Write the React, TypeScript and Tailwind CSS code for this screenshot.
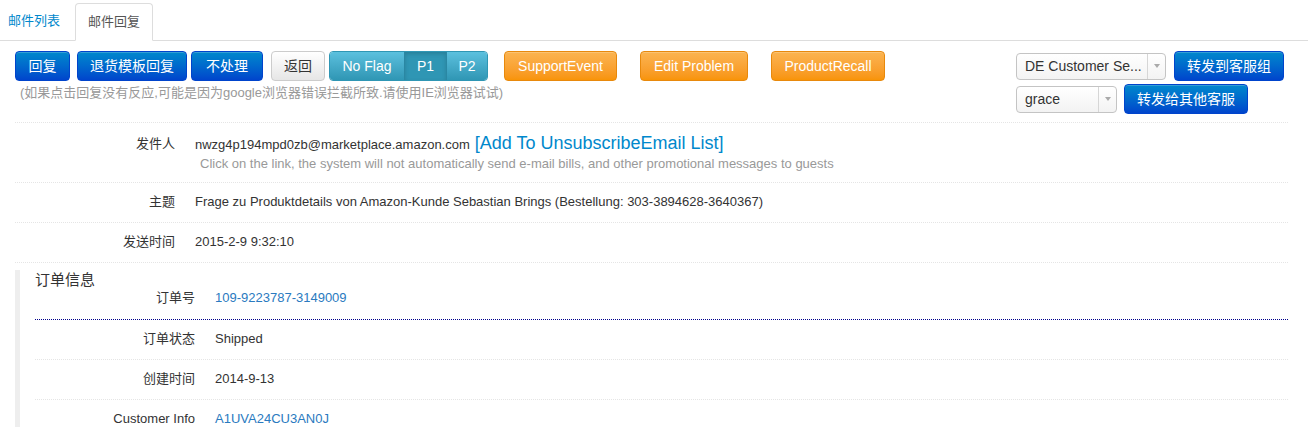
const font = { fontFamily: '"Liberation Sans", Arial, "Noto Sans CJK SC", sans-serif' }

function Btn({ children, kind, className = '' }: { children: React.ReactNode; kind: 'primary' | 'default' | 'warning'; className?: string }) {
  const styles = {
    primary: 'text-white border-[#0044cc] bg-gradient-to-b from-[#0088cc] to-[#0044cc]',
    default: 'text-[#333] border-[#cccccc] bg-gradient-to-b from-white to-[#e6e6e6]',
    warning: 'text-white border-[#e8890c] bg-gradient-to-b from-[#fbb450] to-[#f89406]',
  }
  return (
    <button className={`h-[30px] px-3 rounded-[4px] border text-[14px] leading-none shadow-[inset_0_1px_0_rgba(255,255,255,0.2)] ${styles[kind]} ${className}`}>
      {children}
    </button>
  )
}

function FakeSelect({ label, className }: { label: string; className: string }) {
  return (
    <div className={`h-[27px] flex items-stretch border border-[#c4c4c4] rounded-[4px] bg-gradient-to-b from-white to-[#f3f3f3] text-[14px] text-[#333] ${className}`}>
      <div className="flex-1 flex items-center px-2 truncate">{label}</div>
      <div className="w-[18px] border-l border-[#d6d6d6] flex items-center justify-center">
        <span className="block w-0 h-0 border-l-[3px] border-r-[3px] border-t-[4px] border-l-transparent border-r-transparent border-t-[#aaa]" />
      </div>
    </div>
  )
}

function Row({ label, children, h = 'h-[40px]', line = 'border-[#e5e5e5]', pt = 'pt-[9px]' }: { label: string; children: React.ReactNode; h?: string; line?: string; pt?: string }) {
  return (
    <div className={`flex items-start border-b border-dotted ${pt} ${line} ${h}`}>
      <div className="w-[160px] text-right text-[13px] text-[#333] shrink-0">{label}</div>
      <div className="pl-5 text-[13px] text-[#333]">{children}</div>
    </div>
  )
}

export default function App() {
  return (
    <div className="bg-white w-[1308px] h-[427px] overflow-hidden" style={font}>
      {/* tabs */}
      <div className="h-[41px] border-b border-[#dddddd] flex items-end pl-[2px]">
        <div className="h-[38px] px-[6px] flex items-center text-[13px] text-[#0088cc] mr-[9px]">邮件列表</div>
        <div className="h-[38px] px-[12px] flex items-center text-[13px] text-[#555] bg-white border border-[#dddddd] border-b-white rounded-t-[4px] -mb-px">邮件回复</div>
      </div>

      {/* toolbar */}
      <div className="flex justify-between pl-[15px] pr-[24px] pt-[10px]">
        <div>
          <div className="flex items-center">
            <Btn kind="primary" className="w-[55px]">回复</Btn>
            <Btn kind="primary" className="w-[110px] ml-[7px]">退货模板回复</Btn>
            <Btn kind="primary" className="w-[72px] ml-[4px]">不处理</Btn>
            <Btn kind="default" className="w-[54px] ml-[8px]">返回</Btn>
            <div className="flex ml-[4px] h-[30px] rounded-[4px] overflow-hidden border border-[#2f96b4] text-white text-[14px]">
              <div className="w-[74px] flex items-center justify-center bg-gradient-to-b from-[#5bc0de] to-[#2f96b4]">No Flag</div>
              <div className="w-[42px] flex items-center justify-center bg-[#2f96b4] border-l border-[#2a87a3] shadow-[inset_0_2px_4px_rgba(0,0,0,0.15)]">P1</div>
              <div className="w-[41px] flex items-center justify-center bg-gradient-to-b from-[#5bc0de] to-[#2f96b4] border-l border-[#2a87a3]">P2</div>
            </div>
            <Btn kind="warning" className="w-[113px] ml-[16px]">SupportEvent</Btn>
            <Btn kind="warning" className="w-[108px] ml-[23px]">Edit Problem</Btn>
            <Btn kind="warning" className="w-[114px] ml-[23px]">ProductRecall</Btn>
          </div>
          <div className="pl-[5px] pt-[2px] text-[13px] text-[#999]">(如果点击回复没有反应,可能是因为google浏览器错误拦截所致.请使用IE浏览器试试)</div>
        </div>
        <div className="flex flex-col gap-[3px]">
          <div className="flex items-center">
            <FakeSelect label="DE Customer Se..." className="w-[150px]" />
            <Btn kind="primary" className="w-[110px] ml-[8px] text-[14px]">转发到客服组</Btn>
          </div>
          <div className="flex items-center">
            <FakeSelect label="grace" className="w-[101px] text-[13px]" />
            <Btn kind="primary" className="w-[124px] ml-[7px]">转发给其他客服</Btn>
          </div>
        </div>
      </div>

      {/* mail info */}
      <div className="ml-[15px] mr-[20px] mt-[8px] border-t border-dotted border-[#e5e5e5]">
        <Row label="发件人" h="h-[60px]" pt="pt-[11px]">
          <div className="flex items-baseline h-[17px]">
            <span>nwzg4p194mpd0zb@marketplace.amazon.com</span>
            <span className="ml-[5px] text-[18px] text-[#0088cc] leading-none">[Add To UnsubscribeEmail List]</span>
          </div>
          <div className="pl-[5px] mt-[3px] text-[#999]">Click on the link, the system will not automatically send e-mail bills, and other promotional messages to guests</div>
        </Row>
        <Row label="主题">Frage zu Produktdetails von Amazon-Kunde Sebastian Brings (Bestellung: 303-3894628-3640367)</Row>
        <Row label="发送时间">2015-2-9 9:32:10</Row>
      </div>

      {/* order info */}
      <div className="ml-[15px] mr-[20px] mt-[7px] border-l-[5px] border-[#eeeeee] pl-[15px]">
        <div className="text-[15px] text-[#333] pt-[1px] h-[18px] leading-[18px]">订单信息</div>
        <Row label="订单号" h="h-[32px]" pt="pt-0" line="border-[#00008b]">
          <span className="text-[#2a7ac0]">109-9223787-3149009</span>
        </Row>
        <Row label="订单状态">Shipped</Row>
        <Row label="创建时间">2014-9-13</Row>
        <Row label="Customer Info"><span className="text-[#2a7ac0]">A1UVA24CU3AN0J</span></Row>
      </div>
    </div>
  )
}
